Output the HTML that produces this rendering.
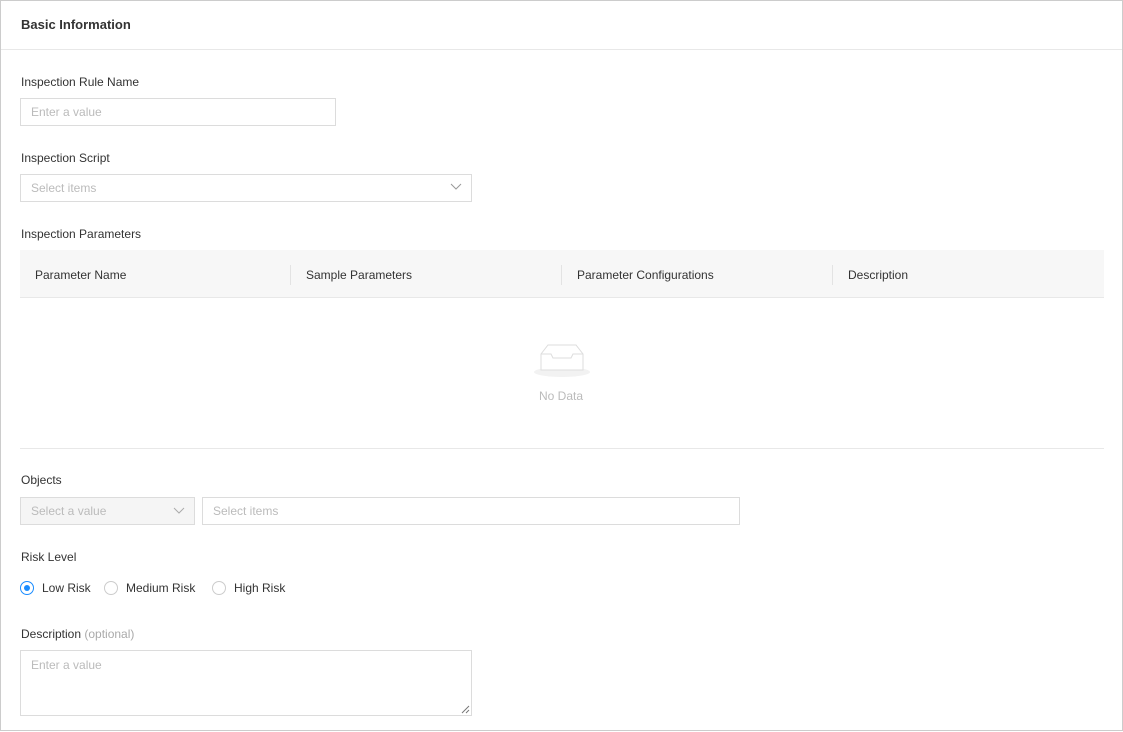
<!DOCTYPE html>
<html><head><style>
*{box-sizing:border-box;margin:0;padding:0}
body{width:1123px;height:732px;background:#fff;font-family:"Liberation Sans",sans-serif;font-size:12px;color:#333;position:relative;overflow:hidden}
.a{position:absolute}
.frame{left:0;top:0;width:1123px;height:731px;border:1px solid #ccc}
.lbl{left:21px;font-size:12px;color:#333}
.in{border:1px solid #dcdcdc;height:28px;padding-left:10px;line-height:26px;color:#bbb;background:#fff}
.radio{width:14px;height:14px;border:1px solid #ccc;border-radius:50%;top:581px}
.rt{top:581px;font-size:12px;color:#333}
</style></head><body>
<div class="a frame"></div>
<div class="a" style="left:21px;top:17px;font-size:13px;font-weight:bold;color:#333">Basic Information</div>
<div class="a" style="left:1px;top:49px;width:1121px;height:1px;background:#e8e8e8"></div>

<div class="a lbl" style="top:75px">Inspection Rule Name</div>
<div class="a in" style="left:20px;top:98px;width:316px">Enter a value</div>

<div class="a lbl" style="top:151px">Inspection Script</div>
<div class="a in" style="left:20px;top:174px;width:452px">Select items</div>
<svg class="a" style="left:450px;top:183px" width="12" height="8"><path d="M1 1l5 5 5-5" fill="none" stroke="#999" stroke-width="1"/></svg>

<div class="a lbl" style="top:227px">Inspection Parameters</div>
<div class="a" style="left:20px;top:250px;width:1084px;height:48px;background:#f7f7f7;border-bottom:1px solid #e8e8e8"></div>
<div class="a" style="left:35px;top:268px">Parameter Name</div>
<div class="a" style="left:306px;top:268px">Sample Parameters</div>
<div class="a" style="left:577px;top:268px">Parameter Configurations</div>
<div class="a" style="left:848px;top:268px">Description</div>
<div class="a" style="left:290px;top:265px;width:1px;height:20px;background:#e3e3e3"></div>
<div class="a" style="left:561px;top:265px;width:1px;height:20px;background:#e3e3e3"></div>
<div class="a" style="left:832px;top:265px;width:1px;height:20px;background:#e3e3e3"></div>
<svg class="a" style="left:532px;top:340px" width="60" height="40">
<ellipse cx="30" cy="32" rx="28" ry="5" fill="#f2f2f2"/>
<path d="M9 30V14l7-9h28l7 9v16z" fill="#fff" stroke="#ddd"/>
<path d="M9 14h10l2 4h18l2-4h10" fill="none" stroke="#ddd"/>
</svg>
<div class="a" style="left:539px;top:389px;color:#bbb">No Data</div>
<div class="a" style="left:20px;top:448px;width:1084px;height:1px;background:#e8e8e8"></div>

<div class="a lbl" style="top:473px">Objects</div>
<div class="a in" style="left:20px;top:497px;width:175px;background:#f5f5f5">Select a value</div>
<svg class="a" style="left:173px;top:507px" width="12" height="8"><path d="M1 1l5 5 5-5" fill="none" stroke="#aaa"/></svg>
<div class="a in" style="left:202px;top:497px;width:538px">Select items</div>

<div class="a lbl" style="top:550px">Risk Level</div>
<div class="a radio" style="left:20px;border-color:#1a8cff"></div>
<div class="a" style="left:24px;top:585px;width:6px;height:6px;border-radius:50%;background:#1a8cff"></div>
<div class="a rt" style="left:42px">Low Risk</div>
<div class="a radio" style="left:104px"></div>
<div class="a rt" style="left:126px">Medium Risk</div>
<div class="a radio" style="left:212px"></div>
<div class="a rt" style="left:234px">High Risk</div>

<div class="a lbl" style="top:627px">Description <span style="color:#aaa">(optional)</span></div>
<div class="a in" style="left:20px;top:650px;width:452px;height:66px;line-height:14px;padding-top:7px">Enter a value</div>
<svg class="a" style="left:461px;top:705px" width="9" height="9"><path d="M8 1L1 8M8 5L5 8" stroke="#777"/></svg>
</body></html>
